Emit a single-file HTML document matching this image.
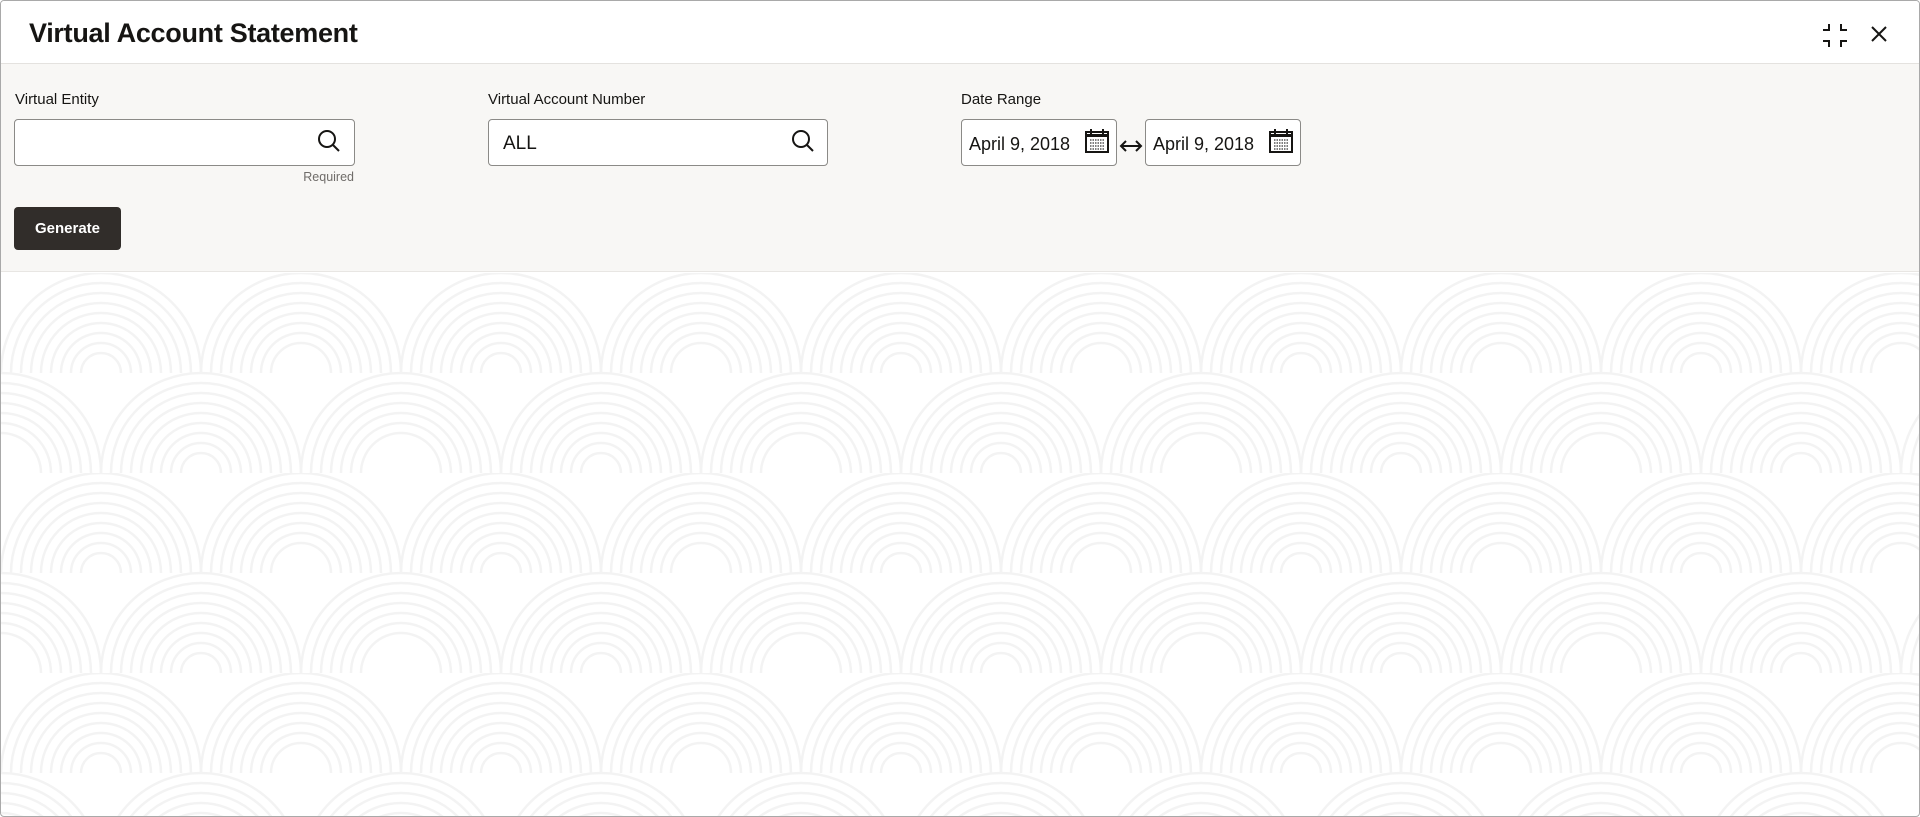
<!DOCTYPE html>
<html><head><style>
*{box-sizing:border-box;margin:0;padding:0}
body{width:1920px;height:817px;overflow:hidden;font-family:"Liberation Sans",sans-serif;color:#161513;background:#fff}
.frame{position:absolute;left:0;top:0;width:1920px;height:817px;border:1px solid #a9a9a9;border-radius:4px;overflow:hidden}
.hdr{position:absolute;left:0;top:0;width:100%;height:63px;background:#fff;border-bottom:1px solid #e4e2df}
.title{position:absolute;left:28px;top:17px;font-size:27px;font-weight:bold;letter-spacing:-0.3px}
.form{position:absolute;left:0;top:63px;width:100%;height:208px;background:#f8f7f5;border-bottom:1px solid #e8e6e3}
.lbl{position:absolute;font-size:15px;top:90px}
.inp{position:absolute;top:118px;height:47px;background:#fff;border:1px solid #8b8a87;border-radius:4px;font-size:19px}
.inp span{position:absolute;left:14px;top:13px}
.req{position:absolute;left:296px;top:169px;width:57px;text-align:right;font-size:12.5px;color:#6f6c69}
.btn{position:absolute;left:13px;top:206px;width:107px;height:43px;background:#312d2a;color:#fff;border-radius:4px;font-size:15px;font-weight:bold;text-align:center;line-height:43px}
.bg{position:absolute;left:0;top:272px}
</style></head><body>
<div class="frame">
<svg class="bg" width="1920" height="545">
<defs><pattern id="p" width="400" height="200" patternUnits="userSpaceOnUse">
<g fill="none" stroke="#f3f3f3" stroke-width="2.5">
<path d="M0 100a100 100 0 0 1 200 0M10 100a90 90 0 0 1 180 0M20 100a80 80 0 0 1 160 0M30 100a70 70 0 0 1 140 0M40 100a60 60 0 0 1 120 0M50 100a50 50 0 0 1 100 0M60 100a40 40 0 0 1 80 0M70 100a30 30 0 0 1 60 0M80 100a20 20 0 0 1 40 0"/>
<path d="M200 100a100 100 0 0 1 200 0M210 100a90 90 0 0 1 180 0M220 100a80 80 0 0 1 160 0M230 100a70 70 0 0 1 140 0M240 100a60 60 0 0 1 120 0M250 100a50 50 0 0 1 100 0M260 100a40 40 0 0 1 80 0M270 100a30 30 0 0 1 60 0"/>
<path d="M100 200a100 100 0 0 1 200 0M110 200a90 90 0 0 1 180 0M120 200a80 80 0 0 1 160 0M130 200a70 70 0 0 1 140 0M140 200a60 60 0 0 1 120 0M150 200a50 50 0 0 1 100 0M160 200a40 40 0 0 1 80 0M170 200a30 30 0 0 1 60 0M180 200a20 20 0 0 1 40 0"/>
<path d="M-100 200a100 100 0 0 1 200 0M-90 200a90 90 0 0 1 180 0M-80 200a80 80 0 0 1 160 0M-70 200a70 70 0 0 1 140 0M-60 200a60 60 0 0 1 120 0M-50 200a50 50 0 0 1 100 0M-40 200a40 40 0 0 1 80 0M300 200a100 100 0 0 1 200 0M310 200a90 90 0 0 1 180 0M320 200a80 80 0 0 1 160 0M330 200a70 70 0 0 1 140 0M340 200a60 60 0 0 1 120 0M350 200a50 50 0 0 1 100 0M360 200a40 40 0 0 1 80 0"/>
</g></pattern></defs>
<rect width="1920" height="545" fill="url(#p)"/>
</svg>
<div class="hdr"><div class="title">Virtual Account Statement</div>
<svg style="position:absolute;left:1820px;top:21px" width="28" height="27" fill="none" stroke="#161513" stroke-width="2">
<path d="M8 2v6H2M20 2v6h6M8 25v-6H2M20 25v-6h6"/></svg>
<svg style="position:absolute;left:1869px;top:24px" width="18" height="18" stroke="#161513" stroke-width="2"><path d="M2 2l14 14M16 2L2 16"/></svg>
</div>
<div class="form">
<div class="lbl" style="left:14px;top:27px">Virtual Entity</div>
<div class="lbl" style="left:487px;top:27px">Virtual Account Number</div>
<div class="lbl" style="left:960px;top:27px">Date Range</div>
</div>
<div class="inp" style="left:13px;width:341px"></div>
<div class="inp" style="left:487px;width:340px"><span>ALL</span></div>
<svg style="position:absolute;left:316px;top:128px" width="24" height="24" fill="none" stroke="#161513" stroke-width="2"><circle cx="10" cy="10" r="8"/><path d="M16 16l6 6"/></svg>
<svg style="position:absolute;left:790px;top:128px" width="24" height="24" fill="none" stroke="#161513" stroke-width="2"><circle cx="10" cy="10" r="8"/><path d="M16 16l6 6"/></svg>
<div class="req">Required</div>
<div class="inp" style="left:960px;width:156px;font-size:18px"><span style="left:7px;top:14px">April 9, 2018</span></div>
<div class="inp" style="left:1144px;width:156px;font-size:18px"><span style="left:7px;top:14px">April 9, 2018</span></div>
<svg style="position:absolute;left:1084px;top:128px" width="24" height="24"><rect x="1" y="3" width="22" height="20" fill="none" stroke="#161513" stroke-width="2"/><path d="M6 0v6M18 0v6" stroke="#161513" stroke-width="2"/><rect x="1" y="5" width="22" height="3" fill="#161513"/><path d="M5 11h14M5 14h14M5 17h14M5 20h14" stroke="#555" stroke-width="1.5" stroke-dasharray="1.5 1"/></svg>
<svg style="position:absolute;left:1268px;top:128px" width="24" height="24"><rect x="1" y="3" width="22" height="20" fill="none" stroke="#161513" stroke-width="2"/><path d="M6 0v6M18 0v6" stroke="#161513" stroke-width="2"/><rect x="1" y="5" width="22" height="3" fill="#161513"/><path d="M5 11h14M5 14h14M5 17h14M5 20h14" stroke="#555" stroke-width="1.5" stroke-dasharray="1.5 1"/></svg>
<svg style="position:absolute;left:1118px;top:137px" width="24" height="16" fill="none" stroke="#161513" stroke-width="2"><path d="M2 8h20M7 3L2 8l5 5M17 3l5 5-5 5"/></svg>
<div class="btn">Generate</div>
</div>
</body></html>
